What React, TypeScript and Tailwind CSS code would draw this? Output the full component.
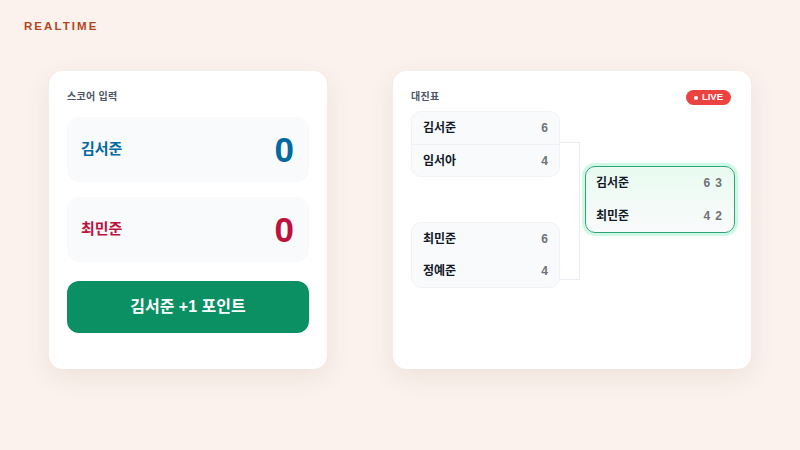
import React from "react";

const font = { fontFamily: '"Liberation Sans", "Noto Sans CJK KR", sans-serif' };

function MatchRow({ name, score, divider }: { name: string; score: string; divider?: boolean }) {
  return (
    <div
      className={`flex h-[32px] items-center justify-between px-[11px] ${divider ? "border-t border-[#eef1f5]" : ""}`}
    >
      <span className="text-[12px] font-bold text-[#111827]">{name}</span>
      <span className="text-[12px] font-bold text-[#6f7278]">{score}</span>
    </div>
  );
}

export default function App() {
  return (
    <div className="h-[450px] w-[800px] overflow-hidden bg-[#fbf2ed]" style={font}>
      <div className="pl-6 pt-[20px] text-[11.5px] font-bold leading-[12px] tracking-[0.18em] text-[#b4441b]">
        REALTIME
      </div>
      <div className="mt-[39px] flex justify-center gap-[66px]">
        {/* Score input card */}
        <div className="flex h-[298px] w-[278px] flex-col rounded-[14px] bg-white p-[18px] shadow-[0_8px_24px_rgba(120,80,60,0.10)]">
          <div className="mt-[1px] text-[10px] font-bold leading-[14px] tracking-[0.03em] text-[#4b5563]">스코어 입력</div>
          <div className="mt-[13px] flex h-[65px] items-center justify-between rounded-[12px] bg-[#f8fafc] pl-[14px] pr-[15px]">
            <span className="text-[15px] font-bold text-[#0369a1]">김서준</span>
            <span className="text-[35px] font-bold leading-none text-[#0369a1]">0</span>
          </div>
          <div className="mt-[15px] flex h-[65px] items-center justify-between rounded-[12px] bg-[#f8fafc] pl-[14px] pr-[15px]">
            <span className="text-[15px] font-bold text-[#be123c]">최민준</span>
            <span className="text-[35px] font-bold leading-none text-[#be123c]">0</span>
          </div>
          <button className="mt-[19px] flex h-[52px] items-center justify-center rounded-[12px] bg-[#0a9063] text-[16px] font-bold text-white">
            김서준 +1 포인트
          </button>
        </div>

        {/* Bracket card */}
        <div className="flex h-[298px] w-[358px] flex-col rounded-[14px] bg-white pl-[18px] pr-[16px] pt-[18px] shadow-[0_8px_24px_rgba(120,80,60,0.10)]">
          <div className="flex items-start justify-between">
            <div className="mt-[1px] text-[10px] font-bold leading-[14px] tracking-[0.03em] text-[#4b5563]">대진표</div>
            <div className="mr-[4px] mt-[1px] flex h-[15px] items-center gap-[4px] rounded-full bg-[#ea4340] px-[8px] text-[9.5px] font-bold text-white">
              <span className="h-[4px] w-[4px] rounded-full bg-white" />
              LIVE
            </div>
          </div>
          <div className="mt-[6px] flex items-start">
            <div className="flex w-[149px] flex-col gap-[45px]">
              <div className="rounded-[10px] border border-[#f1f3f6] bg-[#f8fafc]">
                <MatchRow name="김서준" score="6" />
                <MatchRow name="임서아" score="4" divider />
              </div>
              <div className="rounded-[10px] border border-[#f1f3f6] bg-[#f8fafc]">
                <MatchRow name="최민준" score="6" />
                <MatchRow name="정예준" score="4" />
              </div>
            </div>
            <div className="mt-[31px] h-[138px] w-[20px] border-y border-r border-[#e9ecf0]" />
            <div className="ml-[5px] mt-[55px] w-[150px] overflow-hidden rounded-[10px] border border-[#2fa577] bg-linear-to-b from-[#e9fbf1] to-[#f9fafb] shadow-[0_0_0_3px_rgba(167,243,208,0.55)]">
              <div className="flex h-[32.5px] items-center justify-between pl-[10px] pr-[11px]">
                <span className="text-[12px] font-bold text-[#111827]">김서준</span>
                <span className="text-[12px] font-bold tracking-[0.08em] text-[#6f7278]">6 3</span>
              </div>
              <div className="flex h-[32.5px] items-center justify-between pl-[10px] pr-[11px]">
                <span className="text-[12px] font-bold text-[#111827]">최민준</span>
                <span className="text-[12px] font-bold tracking-[0.08em] text-[#6f7278]">4 2</span>
              </div>
            </div>
          </div>
        </div>
      </div>
    </div>
  );
}
